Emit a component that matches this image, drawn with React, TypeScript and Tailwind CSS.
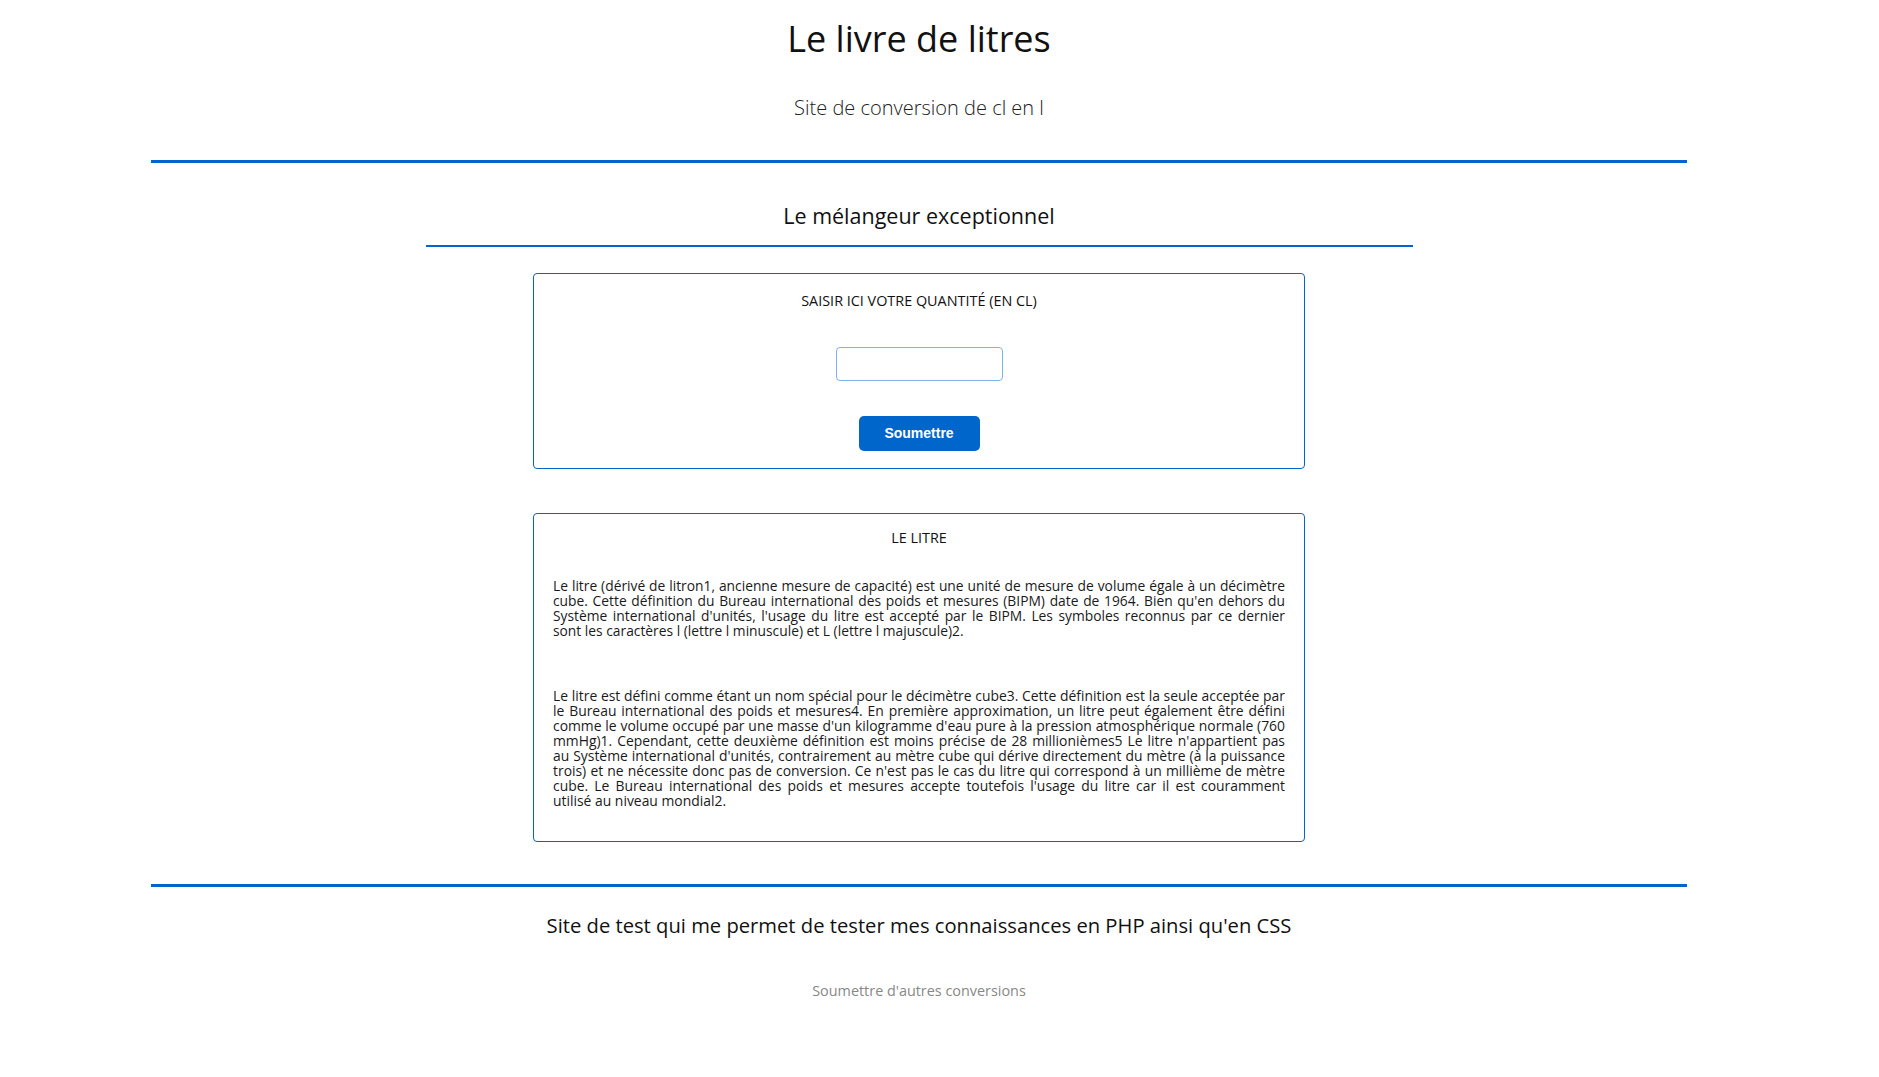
export default function App() {
  return (
    <div className="w-[1838px] min-h-screen bg-white flex flex-col items-center font-['Open_Sans',sans-serif] text-[#111]">
      {/* header */}
      <h1 className="mt-[19px] text-[36px] leading-[40px] font-normal">Le livre de litres</h1>
      <p className="mt-[37px] text-[20px] leading-[24px] font-light text-[#222]">Site de conversion de cl en l</p>
      <div className="mt-[40px] w-[1536px] h-[3px] bg-[#0066cc]" />

      {/* main */}
      <h2 className="mt-[41px] text-[21.5px] leading-[24px] font-normal">Le mélangeur exceptionnel</h2>
      <div className="mt-[17px] w-[987px] h-[2px] bg-[#0066cc]" />

      <form
        className="mt-[26px] w-[772px] border border-[#0066cc] rounded-[4px] flex flex-col items-center pt-[19px] pb-[17px]"
        onSubmit={(e) => e.preventDefault()}
      >
        <label className="text-[14.4px] leading-[16px] uppercase">Saisir ici votre quantité (en cl)</label>
        <input
          type="text"
          className="mt-[38px] w-[167px] h-[34px] border border-[#7fb2e5] rounded-[4px] outline-none px-2"
        />
        <button
          type="submit"
          className="mt-[35px] w-[121px] h-[35px] rounded-[5px] bg-[#0066cc] text-white text-[14px] font-bold font-['Liberation_Sans',Arial,sans-serif]"
        >
          Soumettre
        </button>
      </form>

      <section className="mt-[44px] w-[772px] border border-[#0066cc] rounded-[4px] pt-[16px] pb-[33px] px-[19px] text-[#1a1a1a]">
        <h3 className="text-center text-[14.4px] leading-[16px] uppercase text-[#111]">Le litre</h3>
        <p className="mt-[32px] text-[13.8px] leading-[15px] text-justify">
          Le litre (dérivé de litron1, ancienne mesure de capacité) est une unité de mesure de volume égale à un
          décimètre cube. Cette définition du Bureau international des poids et mesures (BIPM) date de 1964. Bien
          qu'en dehors du Système international d'unités, l'usage du litre est accepté par le BIPM. Les symboles
          reconnus par ce dernier sont les caractères l (lettre l minuscule) et L (lettre l majuscule)2.
        </p>
        <p className="mt-[50px] text-[13.9px] leading-[15px] text-justify">
          Le litre est défini comme étant un nom spécial pour le décimètre cube3. Cette définition est la seule
          acceptée par le Bureau international des poids et mesures4. En première approximation, un litre peut
          également être défini comme le volume occupé par une masse d'un kilogramme d'eau pure à la pression
          atmosphérique normale (760 mmHg)1. Cependant, cette deuxième définition est moins précise de 28
          millionièmes5 Le litre n'appartient pas au Système international d'unités, contrairement au mètre cube
          qui dérive directement du mètre (à la puissance trois) et ne nécessite donc pas de conversion. Ce n'est
          pas le cas du litre qui correspond à un millième de mètre cube. Le Bureau international des poids et
          mesures accepte toutefois l'usage du litre car il est couramment utilisé au niveau mondial2.
        </p>
      </section>

      {/* footer */}
      <div className="mt-[42px] w-[1536px] h-[3px] bg-[#0066cc]" />
      <p className="mt-[26px] text-[20.2px] leading-[24px]">
        Site de test qui me permet de tester mes connaissances en PHP ainsi qu'en CSS
      </p>
      <a href="#" className="mt-[44px] text-[14.4px] leading-[20px] text-[#888]">
        Soumettre d'autres conversions
      </a>
    </div>
  );
}
